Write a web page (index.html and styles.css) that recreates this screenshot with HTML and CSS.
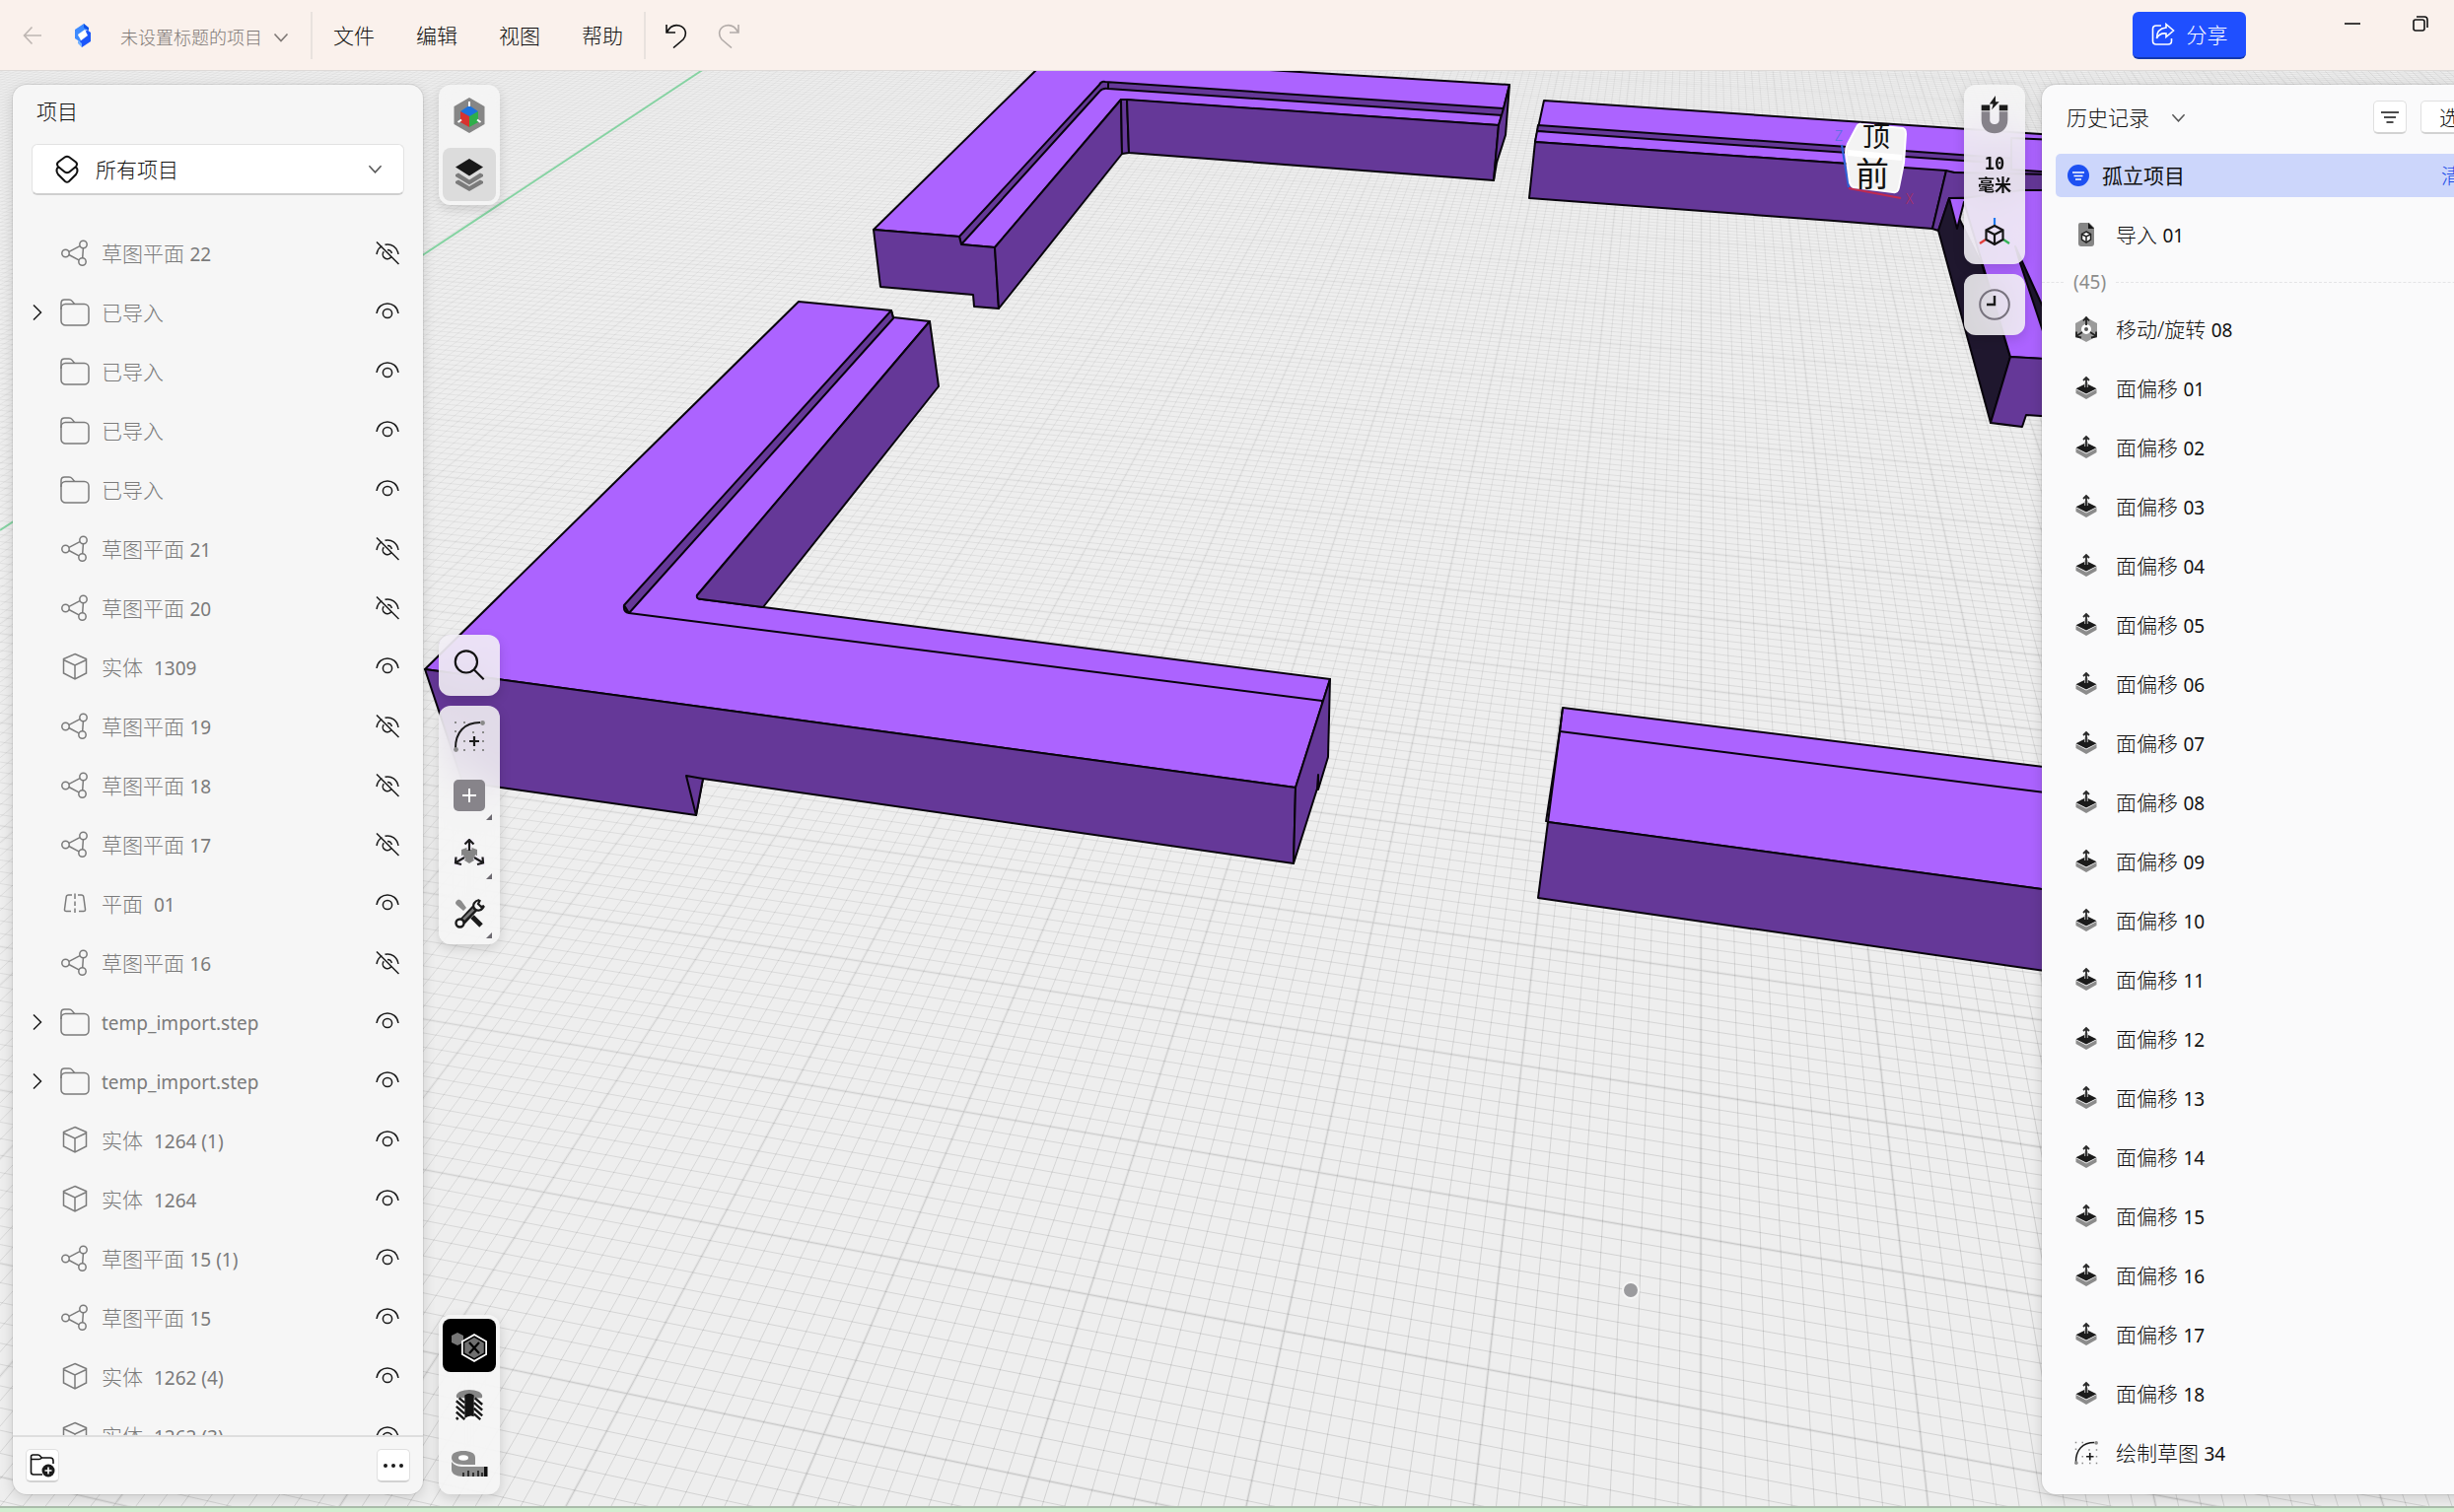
FILE: index.html
```html
<!DOCTYPE html>
<html lang="zh-CN">
<head>
<meta charset="utf-8">
<title>未设置标题的项目</title>
<link rel="stylesheet" href="styles.css">
</head>
<body>
<svg class="defs" aria-hidden="true">
  <defs>
    <symbol id="eye" viewBox="0 0 24 24"><path d="M1 13C3 -0.5 21 -0.5 23 13"/><circle cx="12" cy="13" r="4.6"/></symbol>
    <symbol id="eye-off" viewBox="0 0 24 24"><path d="M1 13C1.800 8.500 4 6 6.500 4.700M9.500 3.200C16 1.800 22 5.500 23 13M8.300 10.200A4.600 4.600 0 1 0 15.500 16M12 8.400A4.600 4.600 0 0 1 16.400 12M1 0.500L23.500 23"/></symbol>
    <symbol id="sketch" viewBox="0 0 30 30"><circle cx="5.500" cy="15" r="3.700"/><circle cx="23.500" cy="6" r="3.700"/><circle cx="22.500" cy="23.500" r="3.700"/><path d="M9 13.400L20 7.700M8.900 16.500L19 21.900M23.400 9.700L22.700 19.800"/></symbol>
    <symbol id="folder" viewBox="0 0 30 30"><rect x="1" y="6.500" width="28" height="21.500" rx="4.500"/><path d="M1 12V5.500Q1 2 4.500 2H9Q11 2 12.300 3.600L14.600 6.500"/></symbol>
    <symbol id="cube" viewBox="0 0 30 30"><path d="M15 1.500L26.500 6.500V21L15 27L3.500 21V6.500ZM3.500 7.500L15 13L26.500 7.500M15 13V27"/></symbol>
    <symbol id="plane" viewBox="0 0 30 30"><path d="M12 6H8.500Q6.500 6 6.200 8L4.500 20.500Q4.300 22.500 6.300 22.500H11M18 6H21.500Q23.500 6 23.800 8L25.500 20.500Q25.700 22.500 23.700 22.500H19M15 4.500V10M15 12.500V17M15 19.500V24"/></symbol>
    <symbol id="chev-d" viewBox="0 0 16 16"><path d="M1.500 4.500L8 11.500L14.500 4.500"/></symbol>
    <symbol id="chev-r" viewBox="0 0 16 16"><path d="M4 0.500L11.500 8L4 15.500"/></symbol>
    <symbol id="offset" viewBox="0 0 24 26"><path d="M1.500 14L12 19.500L22.500 14V18L12 24L1.500 18Z" fill="#8c8c8c"/><path d="M12 8L22.500 13.200L12 18.500L1.500 13.200Z" fill="#1b1b1b"/><path d="M12 12V7" stroke="#bdbdbd" stroke-width="3.600"/><path d="M12 12V3M9 5L12 2L15 5" fill="none" stroke="#2a2a2a" stroke-width="1.800"/></symbol>
    <symbol id="draw" viewBox="0 0 32 32"><path d="M2 28C2 12 11 2 27 2" fill="none" stroke="#1b1b1b" stroke-width="2"/><circle cx="2.500" cy="29.500" r="2.400" fill="#8a8a8a"/><circle cx="29.500" cy="2.500" r="2.400" fill="#8a8a8a"/><path d="M21 16V26M16 21H26" stroke="#1b1b1b" stroke-width="2.200"/><g fill="#8a8a8a"><rect x="1" y="1" width="2" height="2"/><rect x="10" y="1" width="2" height="2"/><rect x="1" y="10" width="2" height="2"/><rect x="19" y="11" width="2" height="2"/><rect x="29" y="11" width="2" height="2"/><rect x="10" y="20" width="2" height="2"/><rect x="29" y="20" width="2" height="2"/><rect x="10" y="29" width="2" height="2"/><rect x="20" y="29" width="2" height="2"/><rect x="29" y="29" width="2" height="2"/></g></symbol>
  </defs>
</svg>

<div class="app">
  <svg class="scene" viewBox="0 0 2489 1534" preserveAspectRatio="xMidYMid slice" aria-label="3D 视图">
    <defs>
      <linearGradient id="far" gradientUnits="userSpaceOnUse" x1="300" y1="72" x2="700" y2="1534">
        <stop offset="0" stop-color="#000" stop-opacity=".035"/><stop offset=".5" stop-color="#000" stop-opacity=".07"/><stop offset="1" stop-color="#000" stop-opacity=".12"/>
      </linearGradient>
      <linearGradient id="far-major" gradientUnits="userSpaceOnUse" x1="300" y1="72" x2="700" y2="1534">
        <stop offset="0" stop-color="#000" stop-opacity="0"/><stop offset=".5" stop-color="#000" stop-opacity=".02"/><stop offset="1" stop-color="#000" stop-opacity=".05"/>
      </linearGradient>
    </defs>
    <path id="grid-minor" class="grid-minor"/>
    <path id="grid-major" class="grid-major"/>
    <path class="axis" d="M0 538L430 258L711 72L750 46"/>

    <g class="solid">
      <path class="top" d="M1075 47L1050 72L886 233L973 240L975 248L1009 251L1137 101L1520 127L1525 110L1531 86L1302 72L1200 65V47Z"/>
      <path class="side" d="M973 240L1115 86Q1117 82 1121 83L1525 110L1524 117L1124 90Q1118 89 1115 93L975 248ZM1124 83V90"/>
      <path class="side" d="M886 233L973 240L975 248L1009 251L1013 313L988 311L987 299L893 291Z"/>
      <path class="side" d="M1009 251L1137 101L1138 156L1013 313Z"/>
      <path class="side" d="M1137 101L1143 101L1145 155L1138 156Z"/>
      <path class="side" d="M1143 101L1520 127L1515 183L1145 155Z"/>
      <path class="side" d="M1520 127L1525 110L1531 86L1527 137L1518 165L1515 183Z"/>

      <path class="top" d="M1566 102L1860 122L2130 140V172L1992 165L1557 144Z"/>
      <path class="side" d="M1560 127L1860 148L2130 167V195L1559 133Z"/>
      <path class="top" d="M1559 133L1860 154L2020 165V178L1860 165L1557 144Z"/>
      <path class="side" d="M1557 144L1860 165L1974 173L1960 232L1860 224L1551 201Z"/>
      <path class="side" d="M1974 173L1982 175L2130 178V198L1977 201L1966 234L1960 232Z"/>
      <path class="top" d="M2040 140L2130 144V178L2040 172Z"/>
      <path class="back" d="M1977 201L1966 234L2019 429L2039 362L2010 268Z"/>
      <path class="top" d="M1977 201L1992 201L2050 193H2130V366L2070 364L2039 362L1992 205L1985 232Z"/>
      <path class="back" d="M2044 250L2049 267L2075 345V318Z"/>
      <path class="side" d="M2039 362L2130 367V426L2055 421L2051 433L2019 429Z"/>

      <path class="top" d="M431 679L810 306L904 315L906 322L943 326L707 604Q706 608 712 608L774 616L1349 689L1314 799Z"/>
      <path class="side" d="M904 315L906 323L638 622Q632 621 633 614ZM633 614L638 622"/>
      <path class="line" d="M638 622L1341 711V721"/>
      <path class="side" d="M943 326L952 392L774 616L712 608Q706 608 707 604Z"/>
      <path class="side" d="M431 679L1314 799L1312 876L713 790L706 827L508 799L469 793Z"/>
      <path class="side" d="M696 787L713 790L706 827Z"/>
      <path class="side" d="M1314 799L1349 689L1347 768L1337 801V786L1336 800L1312 876Z"/>

      <path class="top" d="M1585 718L2130 785V910L1570 834L1582 742Z"/>
      <path class="line" d="M1582 742L2130 811"/>
      <path class="side" d="M1570 834L2130 910V993L1560 911Z"/>
      <path class="line" d="M1585 718L1582 742L1568 834"/>
    </g>

    <g class="view-cube">
      <path d="M1868 147L1875 190" stroke="#2d62d8"/><path d="M1875 191L1928 201" stroke="#c02a50"/>
      <path class="cube-body" d="M1888 126L1930 130Q1933 131 1933 136L1931 165L1926 190Q1925 196 1920 195L1880 190Q1877 189 1876 185L1872 155Q1872 150 1874 146L1883 129Q1885 125 1888 126Z"/>
      <path class="cube-edge" d="M1874 155L1929 160"/>
      <text class="cube-face cube-top" x="1889" y="149">顶</text>
      <text class="cube-face" x="1882" y="189">前</text>
      <text x="1861" y="143" fill="#5570e0">Z</text><text x="1933" y="207" fill="#b03060">X</text>
    </g>
    <circle class="pointer" cx="1654" cy="1309" r="8"/>
  </svg>

  <header class="titlebar">
    <button class="plain back-btn" aria-label="返回"><svg class="ic" viewBox="0 0 20 20"><path d="M9.500 1.500L1.500 10L9.500 18.500M1.500 10H19"/></svg></button>
    <svg class="logo" viewBox="0 0 20 24" aria-hidden="true"><path d="M11 0L2 6V15L8 19V14L5 12L15 5Z" fill="#3e8bff"/><path d="M11 0L16 4V7L11 4Z" fill="#0d51e8"/><path d="M5 11L12 6L15 11L8 17Z" fill="#ffffff"/><path d="M9 24L18 18V9L14 6L13 8L15 12L7 18Z" fill="#1c56fa"/><path d="M5 17V20L9 24V20Z" fill="#73b1ff"/></svg>
    <button class="plain doc-name">未设置标题的项目<svg class="ic" viewBox="0 0 16 16"><use href="#chev-d"/></svg></button>
    <nav class="menus">
      <button class="plain">文件</button><button class="plain">编辑</button><button class="plain">视图</button><button class="plain">帮助</button>
    </nav>
    <div class="history-btns">
      <button class="plain" aria-label="撤销"><svg class="ic" viewBox="0 0 24 26"><path d="M2 2V10H11M2.500 9.500C6 3 11 2 15 3C22 5 23 12 19 17L9 25.500"/></svg></button>
      <button class="plain redo" aria-label="重做"><svg class="ic" viewBox="0 0 24 26"><path d="M22 2V10H13M21.500 9.500C18 3 13 2 9 3C2 5 1 12 5 17L15 25.500"/></svg></button>
    </div>
    <button class="share"><svg class="ic" viewBox="0 0 24 24"><path d="M10 3H5Q1.500 3 1.500 6.500V18.500Q1.500 22 5 22H17Q20.500 22 20.500 18.500V16M15 1.500L22.500 8L15 14.500V11C10 10.500 7 12.500 5.500 16C5.500 9.500 9 5.500 15 5Z"/></svg>分享</button>
    <div class="caption">
      <button class="plain" aria-label="最小化"><svg class="ic" viewBox="0 0 16 16"><path d="M0 8H16"/></svg></button>
      <button class="plain" aria-label="还原"><svg class="ic" viewBox="0 0 16 16"><rect x="1" y="4" width="11" height="11" rx="2"/><path d="M4 1H12Q15 1 15 4V12"/></svg></button>
      <button class="plain" aria-label="关闭"><svg class="ic" viewBox="0 0 16 16"><path d="M1 1L15 15M15 1L1 15"/></svg></button>
    </div>
  </header>

  <main class="workspace">
    <aside class="panel items">
      <h2>项目</h2>
      <label class="scope">
        <svg class="ic" viewBox="0 0 26 30"><path d="M11 2.300Q13 1 15 2.300L22 7.500Q24 9.500 22 12L15 17.700Q13 19 11 17.700L4 12Q2 9.500 4 7.500ZM4 12Q1 16 4 20L11 27Q13 28.500 15 27L22 20Q25 16 22 12"/></svg>
        <select aria-label="项目范围"><option>所有项目</option></select>
        <svg class="ic small" viewBox="0 0 16 16"><use href="#chev-d"/></svg>
      </label>
      <ul class="tree">
        <li><i></i><svg><use href="#sketch"/></svg><span>草图平面 <b>22</b></span><button class="plain" aria-label="显示"><svg><use href="#eye-off"/></svg></button></li>
        <li><i><svg><use href="#chev-r"/></svg></i><svg><use href="#folder"/></svg><span>已导入</span><button class="plain" aria-label="隐藏"><svg><use href="#eye"/></svg></button></li>
        <li><i></i><svg><use href="#folder"/></svg><span>已导入</span><button class="plain" aria-label="隐藏"><svg><use href="#eye"/></svg></button></li>
        <li><i></i><svg><use href="#folder"/></svg><span>已导入</span><button class="plain" aria-label="隐藏"><svg><use href="#eye"/></svg></button></li>
        <li><i></i><svg><use href="#folder"/></svg><span>已导入</span><button class="plain" aria-label="隐藏"><svg><use href="#eye"/></svg></button></li>
        <li><i></i><svg><use href="#sketch"/></svg><span>草图平面 <b>21</b></span><button class="plain" aria-label="显示"><svg><use href="#eye-off"/></svg></button></li>
        <li><i></i><svg><use href="#sketch"/></svg><span>草图平面 <b>20</b></span><button class="plain" aria-label="显示"><svg><use href="#eye-off"/></svg></button></li>
        <li><i></i><svg><use href="#cube"/></svg><span>实体  <b>1309</b></span><button class="plain" aria-label="隐藏"><svg><use href="#eye"/></svg></button></li>
        <li><i></i><svg><use href="#sketch"/></svg><span>草图平面 <b>19</b></span><button class="plain" aria-label="显示"><svg><use href="#eye-off"/></svg></button></li>
        <li><i></i><svg><use href="#sketch"/></svg><span>草图平面 <b>18</b></span><button class="plain" aria-label="显示"><svg><use href="#eye-off"/></svg></button></li>
        <li><i></i><svg><use href="#sketch"/></svg><span>草图平面 <b>17</b></span><button class="plain" aria-label="显示"><svg><use href="#eye-off"/></svg></button></li>
        <li><i></i><svg><use href="#plane"/></svg><span>平面  <b>01</b></span><button class="plain" aria-label="隐藏"><svg><use href="#eye"/></svg></button></li>
        <li><i></i><svg><use href="#sketch"/></svg><span>草图平面 <b>16</b></span><button class="plain" aria-label="显示"><svg><use href="#eye-off"/></svg></button></li>
        <li><i><svg><use href="#chev-r"/></svg></i><svg><use href="#folder"/></svg><span><b>temp_import.step</b></span><button class="plain" aria-label="隐藏"><svg><use href="#eye"/></svg></button></li>
        <li><i><svg><use href="#chev-r"/></svg></i><svg><use href="#folder"/></svg><span><b>temp_import.step</b></span><button class="plain" aria-label="隐藏"><svg><use href="#eye"/></svg></button></li>
        <li><i></i><svg><use href="#cube"/></svg><span>实体  <b>1264 (1)</b></span><button class="plain" aria-label="隐藏"><svg><use href="#eye"/></svg></button></li>
        <li><i></i><svg><use href="#cube"/></svg><span>实体  <b>1264</b></span><button class="plain" aria-label="隐藏"><svg><use href="#eye"/></svg></button></li>
        <li><i></i><svg><use href="#sketch"/></svg><span>草图平面 <b>15 (1)</b></span><button class="plain" aria-label="隐藏"><svg><use href="#eye"/></svg></button></li>
        <li><i></i><svg><use href="#sketch"/></svg><span>草图平面 <b>15</b></span><button class="plain" aria-label="隐藏"><svg><use href="#eye"/></svg></button></li>
        <li><i></i><svg><use href="#cube"/></svg><span>实体  <b>1262 (4)</b></span><button class="plain" aria-label="隐藏"><svg><use href="#eye"/></svg></button></li>
        <li><i></i><svg><use href="#cube"/></svg><span>实体  <b>1262 (3)</b></span><button class="plain" aria-label="隐藏"><svg><use href="#eye"/></svg></button></li>
      </ul>
      <footer>
        <button class="chip" aria-label="新建文件夹"><svg class="ic" viewBox="0 0 26 26"><path d="M13 22H4Q1.500 22 1.500 19.500V4Q1.500 2 3.500 2H8.500Q10 2 11 3.500L12.500 5H21Q24 5 24 8V11M1.500 6.500H9.500Q11 6.500 12.500 5"/><circle cx="19" cy="18" r="6.500" fill="#1b1b1b" stroke="none"/><path d="M19 14.500V21.500M15.500 18H22.500" stroke="#fff"/></svg></button>
        <button class="chip" aria-label="更多"><svg viewBox="0 0 26 26" fill="#1b1b1b"><circle cx="5" cy="13" r="2"/><circle cx="13" cy="13" r="2"/><circle cx="21" cy="13" r="2"/></svg></button>
      </footer>
    </aside>

    <div class="rail left-rail">
      <div class="group">
        <button class="plain" aria-label="外观"><svg viewBox="0 0 36 36"><path d="M18 0L33.500 9V27L18 36L2.500 27V9Z" fill="#868686"/><path d="M18 8L27 14L18 20L9 14Z" fill="#1c72dc"/><path d="M9 14L18 19V30L9 25Z" fill="#d8322f"/><path d="M27 14L18 19V30L27 25Z" fill="#2fae4a"/><path d="M18 4V9M6.500 25L10 22.500M29.500 25L26 22.500" stroke="#fff" stroke-width="2"/></svg></button>
        <button class="plain active" aria-label="图层"><svg viewBox="0 0 36 36"><path d="M4 18L7 16.500L18 23.500L29 16.500L32 18L32 20L18 28.500L4 20ZM4 25L7 23.500L18 30L29 23.500L32 25V27L18 35L4 27Z" fill="#7b7b7b"/><path d="M18 2L32 10.500L18 19.500L4 10.500Z" fill="#181818"/></svg></button>
      </div>
      <div class="mid">
        <div class="group"><button class="plain" aria-label="搜索"><svg class="ic bold" viewBox="0 0 36 36"><circle cx="14.500" cy="14" r="12.500"/><path d="M23.500 23L34.500 34"/></svg></button></div>
        <div class="group">
          <button class="plain" aria-label="绘制草图"><svg viewBox="0 0 32 32"><use href="#draw"/></svg></button>
          <button class="plain more" aria-label="添加"><svg viewBox="0 0 32 32"><rect width="32" height="32" rx="5" fill="#87848a"/><path d="M16 9V23M9 16H23" stroke="#fff" stroke-width="2"/></svg></button>
          <button class="plain more" aria-label="变换"><svg viewBox="0 0 32 32"><path d="M16 8L24 11V20L16 25L8 20V11Z" fill="#868686"/><path d="M16 11V1M11.500 4.500L16 0L20.500 4.500M11 18.500L2 24M1.500 18.500V25L8 26M21 18.500L30 24M30.500 18.500V25L24 26" fill="none" stroke="#f3eff8" stroke-width="5"/><path d="M16 12V2M11.500 5.500L16 1L20.500 5.500M11 19L2.500 24M2.500 18.500L2 24.500L8 26M21 19L29.500 24M29.500 18.500L30 24.500L24 26" fill="none" stroke="#1b1b1b" stroke-width="2.200"/></svg></button>
          <button class="plain more" aria-label="工具"><svg viewBox="0 0 32 32"><path d="M3 3Q5 0 8 3L13 10L10 13L3 7Q1 5 3 3Z" fill="#8c8c8c"/><path d="M19 19L28 28" stroke="#1b1b1b" stroke-width="5"/><path d="M9 24L22 10" stroke="#1b1b1b" stroke-width="7"/><path d="M10 22L21 11" stroke="#777" stroke-width="2.600"/><circle cx="6.500" cy="25.500" r="4" fill="#fff" stroke="#1b1b1b" stroke-width="2.400"/><path d="M26 2C21 3 19 7 21 11C24 14 29 13 31 8M27 2L25 6L28 9L31 8" fill="none" stroke="#1b1b1b" stroke-width="2.200"/></svg></button>
        </div>
      </div>
      <div class="group bottom">
        <button class="plain dark" aria-label="隔离"><svg viewBox="0 0 40 40"><path d="M8 7L14 10V17L8 20L2 17V10Z" fill="#777"/><path d="M25 8L38 15.500V29.500L25 37L12 29.500V15.500Z" fill="#fff"/><path d="M25 11L35.500 17V28L25 34L14.500 28V17Z" fill="#6f6f6f" stroke="#000" stroke-width="1.500"/><path d="M20 17L30 28M30 17L20 28" stroke="#000" stroke-width="2.200"/></svg></button>
        <button class="plain" aria-label="剖面"><svg viewBox="0 0 32 34"><ellipse cx="16" cy="8" rx="14" ry="7" fill="#868686"/><path d="M2 10H30V33H2Z" fill="#fff"/><path d="M2 13L11 21M2 19L11 27M2 25L11 33M2 31L4 33M5 10L11 15M22 10L30 17M21 15L30 23M21 21L30 29M21 27L28 33" stroke="#1b1b1b" stroke-width="2.600"/><path d="M11 7Q16 3 21 7V30Q16 28 11 32Z" fill="#141414"/></svg></button>
        <button class="plain" aria-label="测量"><svg class="wide" viewBox="0 0 38 30"><path d="M1 9C1 4 6 2 13 2S25 4 25 9V16H13C5 16 1 13 1 9Z" fill="#8c8c8c"/><ellipse cx="13" cy="9" rx="5" ry="2.700" fill="#fff"/><path d="M1 13C4 17 8 18 13 18H34V28H13C5 28 1 25 1 21Z" fill="#8c8c8c"/><path d="M13 24V28M18 22V28M23 24V28M28 22V28M32 24V28" stroke="#1b1b1b" stroke-width="1.600"/><rect x="34" y="18" width="3.500" height="10" fill="#111"/></svg></button>
      </div>
    </div>

    <div class="rail right-rail">
      <div class="group">
        <button class="plain" aria-label="吸附"><svg class="tall" viewBox="0 0 32 42"><path d="M2 17V26C2 45 30 45 30 26V17H21V26C21 32 11 32 11 26V17Z" fill="#86828a"/><path d="M2 10H11V16H2ZM21 10H30V16H21Z" fill="#1b1b1b"/><path d="M17 0L10.500 9H14.500L13 15L21 6.500H17Z" fill="#1b1b1b"/></svg></button>
        <button class="plain unit">10<br>毫米</button>
        <button class="plain" aria-label="方向"><svg viewBox="0 0 32 32" fill="none"><path d="M16 0V7" stroke="#1f7af0" stroke-width="2.200"/><path d="M7 22L1 26" stroke="#e2403c" stroke-width="2.200"/><path d="M25 22L31 26" stroke="#34b457" stroke-width="2.200"/><path d="M16 8L24.500 12.500V22L16 27L7.500 22V12.500ZM7.500 12.500L16 17L24.500 12.500M16 17V27" stroke="#141414" stroke-width="2.200"/></svg></button>
      </div>
      <div class="group"><button class="plain" aria-label="历史记录"><svg viewBox="0 0 32 32" fill="none"><circle cx="16" cy="16" r="14.800" stroke="#77727d" stroke-width="2"/><path d="M16 7V16H8" stroke="#1b1b1b" stroke-width="2.400"/></svg></button></div>
    </div>

    <aside class="panel history">
      <div class="history-head">
        <select aria-label="面板"><option>历史记录</option></select>
        <svg class="ic small" viewBox="0 0 16 16"><use href="#chev-d"/></svg>
        <button class="chip" aria-label="筛选"><svg class="ic" viewBox="0 0 26 26"><path d="M4 8H22M7 13H19M9.500 18H16.500"/></svg></button>
        <button class="chip pick">选择</button>
      </div>
      <div class="isolated">
        <svg viewBox="0 0 22 22"><circle cx="11" cy="11" r="11" fill="#1d50f2"/><path d="M5 8H17M6.500 11.500H15.500M8 15H14" stroke="#fff" stroke-width="1.600"/></svg>
        <strong>孤立项目</strong><a href="#clear">清除</a>
      </div>
      <ol class="steps">
        <li><svg viewBox="0 0 24 26"><path d="M6 1H15L20 6V22Q20 25 17 25H7Q4 25 4 22V3Q4 1 6 1Z" fill="#868686"/><path d="M14 1L20 7H14Z" fill="#161616"/><path d="M12 10L16.500 12.500V18L12 21L7.500 18V12.500Z" fill="#fff" stroke="#222" stroke-width="1.500"/><path d="M8 13L12 15L16 13M12 15V20" fill="none" stroke="#222" stroke-width="1.500"/></svg><span>导入 <b>01</b></span></li>
        <li class="skipped"><span>(45)</span></li>
        <li><svg viewBox="0 0 24 26"><path d="M12 1L23 7V20L12 26L1 20V7Z" fill="#9a9a9a"/><circle cx="12" cy="13" r="5" fill="#fff"/><circle cx="12" cy="13" r="2" fill="#555"/><path d="M12 9V2M9 4.500L12 1L15 4.500M8 16L2 20M2 15.500V20.500L7 21.500M16 16L22 20M22 15.500V20.500L17 21.500" fill="none" stroke="#222" stroke-width="1.800"/></svg><span>移动/旋转 <b>08</b></span></li>
        <li><svg><use href="#offset"/></svg><span>面偏移 <b>01</b></span></li>
        <li><svg><use href="#offset"/></svg><span>面偏移 <b>02</b></span></li>
        <li><svg><use href="#offset"/></svg><span>面偏移 <b>03</b></span></li>
        <li><svg><use href="#offset"/></svg><span>面偏移 <b>04</b></span></li>
        <li><svg><use href="#offset"/></svg><span>面偏移 <b>05</b></span></li>
        <li><svg><use href="#offset"/></svg><span>面偏移 <b>06</b></span></li>
        <li><svg><use href="#offset"/></svg><span>面偏移 <b>07</b></span></li>
        <li><svg><use href="#offset"/></svg><span>面偏移 <b>08</b></span></li>
        <li><svg><use href="#offset"/></svg><span>面偏移 <b>09</b></span></li>
        <li><svg><use href="#offset"/></svg><span>面偏移 <b>10</b></span></li>
        <li><svg><use href="#offset"/></svg><span>面偏移 <b>11</b></span></li>
        <li><svg><use href="#offset"/></svg><span>面偏移 <b>12</b></span></li>
        <li><svg><use href="#offset"/></svg><span>面偏移 <b>13</b></span></li>
        <li><svg><use href="#offset"/></svg><span>面偏移 <b>14</b></span></li>
        <li><svg><use href="#offset"/></svg><span>面偏移 <b>15</b></span></li>
        <li><svg><use href="#offset"/></svg><span>面偏移 <b>16</b></span></li>
        <li><svg><use href="#offset"/></svg><span>面偏移 <b>17</b></span></li>
        <li><svg><use href="#offset"/></svg><span>面偏移 <b>18</b></span></li>
        <li><svg><use href="#draw"/></svg><span>绘制草图 <b>34</b></span></li>
      </ol>
    </aside>
  </main>
  <div class="strip"></div>
</div>
<script src="grid.js"></script>
</body>
</html>
```
FILE: styles.css
```css
* { box-sizing: border-box; }
body {
  margin: 0;
  height: 100vh;
  overflow: hidden;
  background: #eeeeee;
  color: #111111;
  font: 300 21px/30px "Noto Sans", "Noto Sans CJK SC", sans-serif;
}
button, select { font: inherit; color: inherit; }
b { font-weight: 400; font-size: 19px; }
.defs { position: absolute; width: 0; height: 0; }
.plain {
  border: 0;
  background: none;
  padding: 0;
  display: flex;
  align-items: center;
  justify-content: center;
}
.ic { fill: none; stroke: currentColor; stroke-width: 1.6; }
.ic.bold { stroke-width: 2.4; }

.app {
  position: relative;
  height: 100%;
  display: flex;
  flex-direction: column;
  overflow: hidden;
}

/* 3D viewport */
.scene { position: absolute; inset: 0; width: 100%; height: 100%; }
.grid-minor { fill: none; stroke: url(#far); stroke-width: 1; }
.grid-major { fill: none; stroke: url(#far-major); stroke-width: 3; }
.axis { fill: none; stroke: #85d3a2; stroke-width: 2; }
.solid path { stroke: #08040c; stroke-width: 2; stroke-linejoin: round; }
.solid .top { fill: #ac63ff; }
.solid .side { fill: #653898; }
.solid .back { fill: #1f172e; }
.solid .line { fill: none; }
.view-cube path { fill: none; stroke-width: 2; }
.view-cube .cube-body { fill: #f3f3f3; stroke: #ffffff; }
.view-cube .cube-edge { stroke: #ffffff; stroke-width: 6; }
.view-cube text { font-size: 14px; }
.view-cube .cube-face { font-size: 34px; font-weight: 400; fill: #111111; }
.view-cube .cube-top { font-size: 28px; }
.pointer { fill: #9b9b9e; stroke: #f6f6f6; stroke-width: 2; }

/* Title bar */
.titlebar {
  position: relative;
  height: 72px;
  flex: none;
  display: flex;
  align-items: center;
  padding-left: 23px;
  background: #faf1ec;
  border-bottom: 1px solid #dedad8;
  margin-right: -69px;
}
.back-btn { color: #bdb6b2; margin-right: 31px; }
.back-btn .ic { width: 20px; height: 20px; }
.logo { width: 20px; height: 24px; margin-right: 28px; }
.doc-name { font-size: 18px; color: #7f7976; gap: 11px; margin-right: 22px; padding-top: 4px; }
.doc-name .ic { width: 16px; height: 16px; }
.menus {
  display: flex;
  align-items: center;
  gap: 42px;
  height: 48px;
  padding: 0 21px;
  border-left: 2px solid #e8e2de;
  border-right: 2px solid #e8e2de;
}
.history-btns { display: flex; gap: 29px; margin-left: 19px; }
.history-btns .ic { width: 24px; height: 26px; }
.redo { color: #b3aca9; }
.share {
  margin-left: auto;
  margin-right: 73px;
  width: 115px;
  height: 48px;
  display: flex;
  align-items: center;
  justify-content: center;
  gap: 12px;
  border: 0;
  border-bottom: 2px solid #1337b0;
  border-radius: 6px;
  background: #1f4fff;
  color: #ffffff;
}
.share .ic { width: 24px; height: 24px; }
.caption { display: flex; align-self: flex-start; }
.caption button { width: 69px; height: 47px; }
.caption .ic { width: 16px; height: 16px; }

/* Workspace */
.workspace {
  position: relative;
  flex: 1;
  min-height: 0;
  display: flex;
  padding: 14px 0 12px 13px;
}
.panel {
  flex: none;
  display: flex;
  flex-direction: column;
  background: #f6f6f6;
  border-radius: 14px;
  box-shadow: 0 0 0 1px rgba(0, 0, 0, .07), 0 4px 14px rgba(0, 0, 0, .14);
  overflow: hidden;
}
.items { width: 416px; }
.items h2 { margin: 12px 24px 18px; font-size: 21px; font-weight: 300; line-height: 30px; }
.scope {
  flex: none;
  display: flex;
  align-items: center;
  height: 52px;
  margin: 0 19px 29px;
  padding: 0 21px;
  gap: 15px;
  background: #ffffff;
  border: 1px solid #e2e2e2;
  border-bottom: 2px solid #cfcfcf;
  border-radius: 6px;
}
.scope .ic { width: 28px; height: 30px; stroke-width: 2; }
.ic.small, .scope .ic.small { width: 15px; height: 15px; stroke-width: 1.6; color: #555555; }
select { appearance: none; border: 0; background: none; padding: 0; outline: 0; }
.scope select { flex: 1; min-width: 0; }

ul, ol { list-style: none; margin: 0; padding: 0; }
.tree { flex: 1; min-height: 0; overflow: hidden; }
.tree li {
  height: 60px;
  display: flex;
  align-items: center;
  padding: 0 24px 0 17px;
  color: #7b7b7b;
}
.tree span, .steps span { flex: 1; white-space: pre; }
.tree i { width: 31px; display: flex; color: #1b1b1b; }
.tree svg { fill: none; stroke: currentColor; stroke-width: 1.5; width: 30px; height: 30px; flex: none; }
.tree i svg { width: 16px; height: 16px; }
.tree li > svg { margin-right: 12px; }
.tree .plain { color: #1b1b1b; }
.tree .plain svg { width: 24px; height: 24px; }
.items footer {
  flex: none;
  height: 60px;
  display: flex;
  align-items: center;
  justify-content: space-between;
  padding: 0 13px;
  border-top: 2px solid #dedede;
}
.chip {
  width: 34px;
  height: 34px;
  padding: 0;
  display: flex;
  align-items: center;
  justify-content: center;
  background: #ffffff;
  border: 1px solid #e0e0e0;
  border-bottom: 2px solid #d2d2d2;
  border-radius: 5px;
}
.chip svg { width: 26px; height: 26px; }

/* Tool rails */
.rail { width: 62px; flex: none; }
.left-rail {
  margin-left: 16px;
  display: grid;
  grid-template-rows: 1fr auto 1fr;
}
.right-rail {
  margin-left: auto;
  margin-right: 17px;
  display: flex;
  flex-direction: column;
  align-items: stretch;
  gap: 10px;
}
.mid { display: grid; gap: 10px; }
.group {
  padding: 4px;
  display: grid;
  gap: 6px;
  border-radius: 12px;
  background: rgba(246, 246, 246, .86);
  backdrop-filter: blur(20px);
  box-shadow: 0 4px 12px rgba(0, 0, 0, .14);
}
.left-rail .group { align-self: start; }
.left-rail .bottom { align-self: end; }
.group .plain { position: relative; height: 54px; border-radius: 8px; }
.group svg { width: 32px; height: 32px; }
.group .wide { width: 38px; height: 30px; }
.group .tall { width: 32px; height: 40px; }
.left-rail > .group:first-child svg { width: 36px; height: 36px; }
.group .active { background: #dcdcdc; }
.group .dark { background: #000000; }
.group .dark svg { width: 40px; height: 40px; }
.more::after {
  content: "";
  position: absolute;
  right: 4px;
  bottom: 2px;
  border: 3px solid transparent;
  border-right-color: #6c6970;
  border-bottom-color: #6c6970;
}
.group .unit {
  display: block;
  font: 700 17px/22px "DejaVu Sans Mono", "Noto Sans CJK SC", monospace;
  text-align: center;
}

/* History */
.history { width: 480px; margin-right: -62px; background: #fafafb; }
.history-head {
  display: flex;
  align-items: center;
  height: 66px;
  padding: 0 16px 0 25px;
}
.history-head .small { margin: 0 auto 0 22px; }
.history-head .chip + .chip { margin-left: 14px; }
.chip.pick { width: 80px; }
.isolated {
  display: flex;
  align-items: center;
  height: 44px;
  margin: 4px 14px 8px;
  padding: 0 19px 0 12px;
  background: #ccd6fb;
  border-radius: 5px;
}
.isolated svg { width: 22px; height: 22px; margin-right: 13px; }
.isolated strong { font-weight: 400; flex: 1; }
.isolated a { color: #1f4fe8; text-decoration: none; }
.steps li { display: flex; align-items: center; height: 60px; padding-left: 33px; }
.steps svg { width: 24px; height: 26px; margin-right: 18px; }
.steps .skipped { height: 36px; padding-left: 0; color: #8c8c8c; gap: 10px; }
.skipped span { flex: none; font-size: 19px; font-weight: 400; }
.skipped::before, .skipped::after { content: ""; border-top: 1px dashed #e4e4e6; width: 22px; }
.skipped::after { flex: 1; }

.strip { position: relative; flex: none; height: 6px; background: #d0eed0; border-top: 2px solid #aabcaa; }
```
FILE: grid.js
```javascript
// Ground grid in perspective: two vanishing points and one anchor crossing.
const anchor = [1725, 1430];
const depthVP = [1726, -595], depthStep = 0.094;
const crossVP = [-8850, -557], crossStep = 0.0208;

function project(u, v) {
  const a = v * depthStep, b = u * crossStep, w = 1 + a + b;
  return [0, 1].map(i => ((anchor[i] + a * depthVP[i] + b * crossVP[i]) / w).toFixed(1)).join(' ');
}

let minor = '', major = '';
function add(n, from, to) {
  const d = 'M' + from + 'L' + to;
  if (n % 10 === 0) major += d;
  minor += d;
}
for (let n = -120; n <= 270; n++) add(n, project(n / 10, -5), project(n / 10, 27));
for (let n = -50; n <= 270; n++) add(n, project(-12, n / 10), project(27, n / 10));

document.getElementById('grid-minor').setAttribute('d', minor);
document.getElementById('grid-major').setAttribute('d', major);
```
